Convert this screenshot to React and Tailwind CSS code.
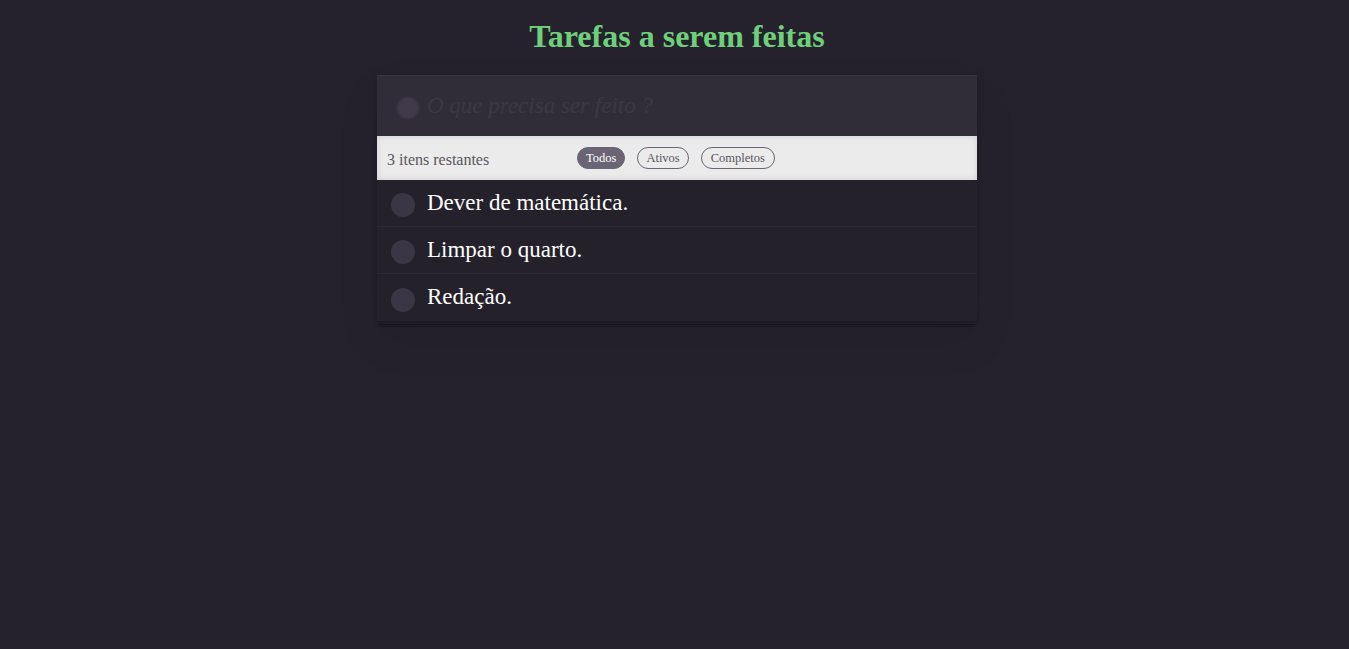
import React from "react";

const items = ["Dever de matemática.", "Limpar o quarto.", "Redação."];

export default function App() {
  return (
    <div className="min-h-[649px] w-full bg-[#25222d] font-['Liberation_Serif',serif] flex flex-col items-center pl-[5px]">
      <h1 className="mt-[16px] text-[32px] leading-[40px] font-bold text-[#6fcf7b]">Tarefas a serem feitas</h1>
      <div className="mt-[19px] w-[600px] bg-[#25222d] shadow-[0_2px_4px_0_rgba(0,0,0,0.2),0_20px_40px_0_rgba(0,0,0,0.08),0_4px_0_-1px_#25222d,0_5px_1px_-1px_rgba(0,0,0,0.25),0_8px_0_-3px_#25222d,0_9px_1px_-3px_rgba(0,0,0,0.25)]">
        <div className="h-[61px] bg-[#302d38] border-t border-[#37343f] flex items-center pl-[20px]">
          <div className="w-[22px] h-[22px] rounded-full bg-[#403a4b] blur-[1px] mt-[3px]" />
          <span className="ml-[8px] text-[23px] italic text-[#3b3846] mt-[1px]">O que precisa ser feito ?</span>
        </div>
        <div className="h-[44px] bg-[#ebebeb] shadow-[inset_0_0_6px_rgba(0,0,0,0.12)] flex items-center pl-[10px] text-[#5a5660]">
          <span className="w-[190px] text-[16px] mt-[3px]">3 itens restantes</span>
          <div className="flex items-center gap-[12px] text-[12.5px]">
            <span className="h-[22px] px-[8px] rounded-full bg-[#6a6475] text-white flex items-center border border-[#6a6475]">Todos</span>
            <span className="h-[22px] px-[8px] rounded-full border border-[#6a6475] text-[#5a5660] flex items-center">Ativos</span>
            <span className="h-[22px] px-[9px] rounded-full border border-[#6a6475] text-[#5a5660] flex items-center">Completos</span>
          </div>
        </div>
        {items.map((t, i) => (
          <div key={i} className={"h-[47px] flex items-center pl-[14px] bg-[#24212b] " + (i < items.length - 1 ? "border-b border-[#2c2933]" : "")}>
            <div className="w-[24px] h-[24px] rounded-full bg-[#3a3645] mt-[4px]" />
            <span className="ml-[12px] text-[23px] text-white">{t}</span>
          </div>
        ))}
      </div>
    </div>
  );
}
